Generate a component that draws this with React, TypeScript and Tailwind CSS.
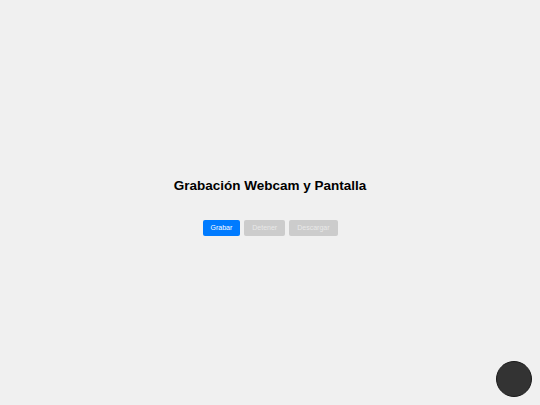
import React from "react";

export default function App() {
  return (
    <div
      className="w-[540px] h-[405px] bg-[#f0f0f0] flex flex-col items-center pt-[178px] relative overflow-hidden"
      style={{ fontFamily: '"Liberation Sans", Arial, sans-serif' }}
    >
      <h1 className="text-[13.5px] leading-[16px] font-bold text-black">
        Grabación Webcam y Pantalla
      </h1>
      <div className="flex gap-[4px] mt-[26px]">
        <button className="h-[16px] px-[8px] text-[7px] leading-[16px] rounded-[2px] bg-[#007bff] text-white">
          Grabar
        </button>
        <button
          disabled
          className="h-[16px] px-[8px] text-[7px] leading-[16px] rounded-[2px] bg-[#cccccc] text-[#e8e8e8]"
        >
          Detener
        </button>
        <button
          disabled
          className="h-[16px] px-[8px] text-[7px] leading-[16px] rounded-[2px] bg-[#cccccc] text-[#e8e8e8]"
        >
          Descargar
        </button>
      </div>
      <div className="absolute right-[8px] bottom-[8px] w-[36px] h-[36px] rounded-full bg-[#333333] border border-[#1a1a1a]" />
    </div>
  );
}
